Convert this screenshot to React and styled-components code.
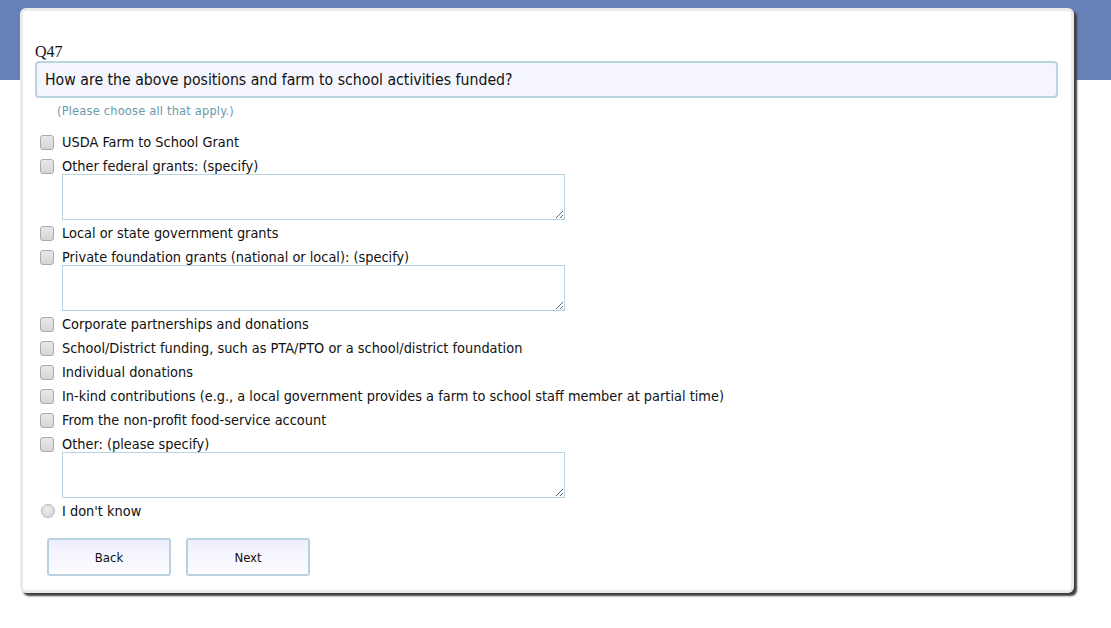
import styled, { createGlobalStyle } from 'styled-components'

const options = [
	{ label: 'USDA Farm to School Grant' },
	{ label: 'Other federal grants: (specify)', specify: true },
	{ label: 'Local or state government grants' },
	{ label: 'Private foundation grants (national or local): (specify)', specify: true },
	{ label: 'Corporate partnerships and donations' },
	{ label: 'School/District funding, such as PTA/PTO or a school/district foundation' },
	{ label: 'Individual donations' },
	{ label: 'In-kind contributions (e.g., a local government provides a farm to school staff member at partial time)' },
	{ label: 'From the non-profit food-service account' },
	{ label: 'Other: (please specify)', specify: true },
]

const App = () => (
	<>
		<GlobalStyle />
		<Page>
			<Card>
				<QNumber>Q47</QNumber>
				<Question>How are the above positions and farm to school activities funded?</Question>
				<Hint>(Please choose all that apply.)</Hint>

				<Options>
					{options.map(opt => (
						<div key={opt.label}>
							<Option>
								<Check />
								<span>{opt.label}</span>
							</Option>
							{opt.specify && <Specify />}
						</div>
					))}
					<Option>
						<Radio />
						<span>I don't know</span>
					</Option>
				</Options>

				<Buttons>
					<NavButton>Back</NavButton>
					<NavButton>Next</NavButton>
				</Buttons>
			</Card>
		</Page>
	</>
)

const GlobalStyle = createGlobalStyle`
	html {
		background: #fff;
	}
	body {
		margin: 0;
		background: #fff linear-gradient(#6780b8, #6780b8) top left / 100% 80px no-repeat;
		font-family: "DejaVu Sans", "Liberation Sans", sans-serif;
		font-stretch: semi-condensed;
		color: #111;
	}
`

const Page = styled.div`
	padding: 8px 0 0 20px;
	height: 620px;
	box-sizing: border-box;
`

const Card = styled.div`
	width: 1054px;
	height: 585px;
	box-sizing: border-box;
	background: #fff;
	border: 3px solid #ebebeb;
	border-radius: 6px;
	box-shadow: 3px 3px 2px #3e3e3e;
	padding: 32px 13px 0 12px;
`

const QNumber = styled.div`
	font-family: "Liberation Serif", serif;
	font-size: 16px;
	line-height: 18px;
`

const Question = styled.div`
	height: 37px;
	box-sizing: border-box;
	display: flex;
	align-items: center;
	padding: 0 8px;
	background: #f5f6fd;
	border: 2px solid #bad4e0;
	border-radius: 4px;
	font-size: 15.7px;
`

const Hint = styled.div`
	margin: 5px 0 0 22px;
	font-size: 12.7px;
	line-height: 16px;
	color: #6a9aab;
	letter-spacing: 0.2px;
`

const Options = styled.div`
	margin-top: 11px;
`

const Option = styled.div`
	height: 24px;
	display: flex;
	align-items: center;
	gap: 8px;
	font-size: 14.4px;
	padding-left: 5px;
`

const Check = styled.span`
	width: 14px;
	height: 15px;
	box-sizing: border-box;
	border: 1px solid #aaaaaa;
	border-radius: 3px;
	background: linear-gradient(#e8e8e8, #d6d6d6);
`

const Radio = styled.span`
	width: 14px;
	height: 14px;
	margin-left: 1px;
	margin-right: -1px;
	box-sizing: border-box;
	border: 1px solid #b4b4b4;
	border-radius: 50%;
	background: radial-gradient(circle at 40% 35%, #ececec, #d3d3d3);
`

const Specify = styled.textarea`
	display: block;
	width: 503px;
	height: 46px;
	box-sizing: border-box;
	margin: -4px 0 1px 27px;
	border: 1px solid #b5d3e0;
	border-radius: 0;
	outline: none;
	font-family: inherit;
`

const Buttons = styled.div`
	display: flex;
	gap: 15px;
	margin: 15px 0 0 12px;
`

const NavButton = styled.button`
	width: 124px;
	height: 38px;
	border: 2px solid #bad1e0;
	border-radius: 3px;
	background: linear-gradient(#eeeffc, #fdfdff);
	font-family: "DejaVu Sans", sans-serif;
	font-stretch: semi-condensed;
	font-size: 13px;
	color: #111;
`

export default App
